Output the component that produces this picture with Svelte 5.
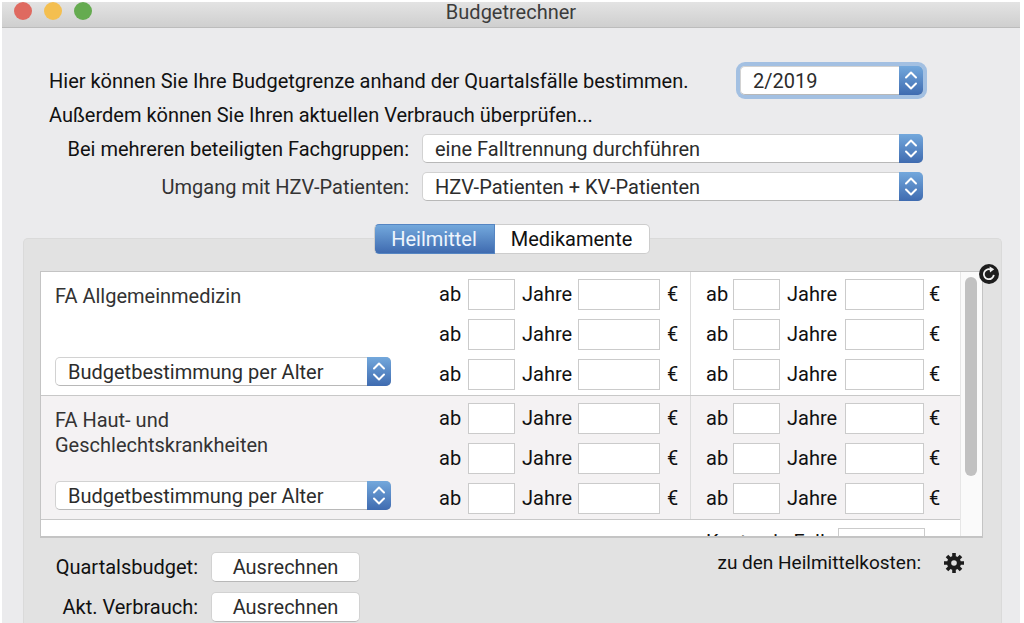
<script lang="ts">
  let quarter = $state("2/2019");
  let split = $state("eine Falltrennung durchführen");
  let hzv = $state("HZV-Patienten + KV-Patienten");
  let tab = $state("Heilmittel");

  const tabs = ["Heilmittel", "Medikamente"];
  const groups = $state([
    { name: "FA Allgemeinmedizin", mode: "Budgetbestimmung per Alter" },
    { name: "FA Haut- und Geschlechtskrankheiten", mode: "Budgetbestimmung per Alter" },
  ]);
</script>

{#snippet stepper()}
  <span class="stepper" aria-hidden="true">
    <svg viewBox="0 0 24 29" width="24" height="29">
      <path d="M7 11.5 L12 6.5 L17 11.5 M7 17.5 L12 22.5 L17 17.5" />
    </svg>
  </span>
{/snippet}

{#snippet ages(prefix: string, side: string)}
  <div class="ages {side}">
    {#each [1, 2, 3] as n}
      <div class="age-row">
        <label for="{prefix}-{side}-{n}">ab</label>
        <input id="{prefix}-{side}-{n}" type="text" />
        <label class="years" for="{prefix}-{side}-{n}-eur">Jahre</label>
        <input id="{prefix}-{side}-{n}-eur" type="text" />
        <span class="euro">€</span>
      </div>
    {/each}
  </div>
{/snippet}

<main class="window">
  <header class="titlebar">
    <div class="lights">
      <button class="light red" aria-label="Schließen"></button>
      <button class="light yellow" aria-label="Minimieren"></button>
      <button class="light green" aria-label="Vergrößern"></button>
    </div>
    <h1>Budgetrechner</h1>
  </header>

  <section class="settings">
    <div class="intro">
      <label for="quarter">Hier können Sie Ihre Budgetgrenze anhand der Quartalsfälle bestimmen.</label>
      <div class="popup focused">
        <select id="quarter" bind:value={quarter}>
          <option>2/2019</option>
        </select>
        {@render stepper()}
      </div>
    </div>
    <p>Außerdem können Sie Ihren aktuellen Verbrauch überprüfen...</p>
    <div class="form">
      <label for="split">Bei mehreren beteiligten Fachgruppen:</label>
      <div class="popup">
        <select id="split" bind:value={split}>
          <option>eine Falltrennung durchführen</option>
        </select>
        {@render stepper()}
      </div>
      <label class="soft" for="hzv">Umgang mit HZV-Patienten:</label>
      <div class="popup">
        <select id="hzv" bind:value={hzv}>
          <option>HZV-Patienten + KV-Patienten</option>
        </select>
        {@render stepper()}
      </div>
    </div>
  </section>

  <section class="panel">
    <div class="tabs" role="tablist">
      {#each tabs as name}
        <button role="tab" aria-selected={tab === name} class:active={tab === name} onclick={() => (tab = name)}>{name}</button>
      {/each}
    </div>

    <div class="list">
      <div class="rows">
        {#each groups as group, i}
          <div class="row">
            <div class="group">
              <label for="mode-{i}">{group.name}</label>
              <div class="popup">
                <select id="mode-{i}" bind:value={group.mode}>
                  <option>Budgetbestimmung per Alter</option>
                </select>
                {@render stepper()}
              </div>
            </div>
            {@render ages(`g${i}`, "first")}
            {@render ages(`g${i}`, "second")}
          </div>
        {/each}
        <div class="row next">
          <label for="next">Kosten je Fall</label>
          <input id="next" type="text" />
        </div>
      </div>
      <div class="scrollbar"><div class="thumb"></div></div>
      <button class="reload" aria-label="Neu laden">
        <svg viewBox="0 0 20 20" width="20" height="20">
          <circle cx="10" cy="10" r="10" fill="#1d1d1d" />
          <path d="M14.8 10.8 A5 5 0 1 1 11.2 5.4" fill="none" stroke="#f2f2f2" stroke-width="1.8" />
          <path d="M10.6 2.4 L15.2 5.2 L11 8.6 Z" fill="#f2f2f2" />
        </svg>
      </button>
    </div>

    <footer class="actions">
      <div class="results">
        <span id="budget">Quartalsbudget:</span>
        <button aria-describedby="budget">Ausrechnen</button>
        <span id="usage">Akt. Verbrauch:</span>
        <button aria-describedby="usage">Ausrechnen</button>
      </div>
      <div class="costs">
        <span>zu den Heilmittelkosten:</span>
        <button class="gear" aria-label="Heilmittelkosten">
          <svg viewBox="0 0 22 22" width="22" height="22">
            <g stroke="#1d1d1d" stroke-width="3.6">
              <path d="M11 1 V21 M1 11 H21 M4 4 L18 18 M18 4 L4 18" />
            </g>
            <circle cx="11" cy="11" r="7" fill="#1d1d1d" />
            <circle cx="11" cy="11" r="2.8" fill="#e2e2e2" />
          </svg>
        </button>
      </div>
    </footer>
  </section>
</main>

<style>
  :global(body) {
    background: #fff;
  }

  * {
    box-sizing: border-box;
  }

  .window {
    display: flex;
    flex-direction: column;
    min-height: calc(100vh - 2px);
    margin: 2px 4px 0 2px;
    background: #ebebed;
    color: #111;
    font-family: Roboto, "Liberation Sans", sans-serif;
    font-size: 20px;
    line-height: 25px;
  }

  button,
  select,
  input {
    margin: 0;
    padding: 0;
    border: 0;
    font: inherit;
    color: inherit;
  }

  .titlebar {
    display: grid;
    grid-template-columns: 1fr auto 1fr;
    height: 26px;
    background: linear-gradient(#e3e3e3, #cfcfcf);
    border-bottom: 1px solid #bcbcbc;
  }

  .titlebar h1 {
    margin: 0;
    font-size: 20px;
    line-height: 21px;
    font-weight: 400;
    color: #3c3c3c;
  }

  .lights {
    display: flex;
    gap: 12px;
    padding-left: 12px;
  }

  .light {
    width: 18px;
    height: 18px;
    border-radius: 50%;
  }

  .red {
    background: #df6a60;
  }

  .yellow {
    background: #f4bf50;
  }

  .green {
    background: #65ab50;
  }

  .settings {
    padding: 38px 97px 0 47px;
  }

  .settings p {
    margin: 0;
    padding-top: 2px;
    line-height: 37px;
  }

  .intro {
    display: grid;
    grid-template-columns: 1fr 183px;
    align-items: center;
  }

  .intro label,
  .form label {
    padding-top: 2px;
  }

  .form {
    display: grid;
    grid-template-columns: 360px 1fr;
    gap: 9px 13px;
    align-items: center;
  }

  .form label {
    text-align: right;
  }

  .form .soft {
    color: #333;
  }

  .popup {
    display: grid;
    border-radius: 5px;
  }

  .popup select {
    grid-area: 1 / 1;
    appearance: none;
    width: 100%;
    height: 29px;
    padding: 2px 36px 0 12px;
    border: 1px solid #d2d2d2;
    border-bottom-color: #b8b8b8;
    border-radius: 5px;
    outline: none;
    background: #fff;
    color: #2c2c2c;
  }

  .focused {
    box-shadow: 0 0 0 4px #a3c0e2;
  }

  .stepper {
    grid-area: 1 / 1;
    justify-self: end;
    width: 24px;
    height: 29px;
    border-radius: 0 5px 5px 0;
    background: linear-gradient(#73a8dc, #3f6bb0);
    pointer-events: none;
  }

  .stepper svg {
    display: block;
    fill: none;
    stroke: #fff;
    stroke-width: 2;
    stroke-linecap: round;
    stroke-linejoin: round;
  }

  .panel {
    flex: 1;
    margin: 37px 18px 0 21px;
    padding: 0 18px 1px 16px;
    background: #e2e2e2;
    border: 1px solid #dadada;
    border-bottom: 0;
    border-radius: 5px 5px 0 0;
  }

  .tabs {
    display: flex;
    justify-content: center;
    margin: -15px 0 17px;
  }

  .tabs button {
    width: 155px;
    height: 30px;
    background: #fff;
    border: 1px solid #cdcdcd;
    border-left: 0;
    border-radius: 0 5px 5px 0;
  }

  .tabs button:first-child {
    width: 121px;
    border-left: 1px solid #cdcdcd;
    border-radius: 5px 0 0 5px;
  }

  .tabs .active {
    background: linear-gradient(#73a8dc, #3f6bb0);
    border-color: #5585c2;
    color: #eef5fd;
  }

  .list {
    position: relative;
    display: flex;
    height: 267px;
    background: #fff;
    border: 1px solid #c4c4c4;
    border-bottom-width: 2px;
  }

  .rows {
    flex: 1;
    overflow: hidden;
  }

  .row {
    display: grid;
    grid-template-columns: 1fr 251px 270px;
    height: 124px;
    border-bottom: 1px solid #c8c8c8;
  }

  .row:nth-child(even) {
    background: #f4f2f3;
  }

  .group {
    display: flex;
    flex-direction: column;
    justify-content: space-between;
    width: 350px;
    padding: 12px 0 9px 14px;
    color: #333;
  }

  .group label {
    width: 240px;
  }

  .ages {
    display: flex;
    flex-direction: column;
    gap: 9px;
    padding-top: 7px;
  }

  .age-row {
    display: grid;
    grid-template-columns: 29px 47px 63px 82px 1fr;
    align-items: center;
  }

  .second {
    padding-left: 15px;
    border-left: 1px solid #dcdcdc;
  }

  .second .age-row {
    grid-template-columns: 27px 47px 65px 79px 1fr;
  }

  .age-row input,
  .next input {
    width: 100%;
    height: 31px;
    background: #fff;
    border: 1px solid #cbcbcb;
  }

  .years {
    padding-left: 7px;
  }

  .euro {
    padding-left: 7px;
  }

  .second .euro {
    padding-left: 5px;
  }

  .next {
    grid-template-columns: 132px 87px;
    justify-content: end;
    padding: 8px 35px 0 0;
  }

  .next label {
    padding-top: 2px;
  }

  .scrollbar {
    width: 22px;
    padding: 5px 4px;
    background: #fafafa;
    border-left: 1px solid #e6e6e6;
  }

  .thumb {
    width: 12px;
    height: 199px;
    border-radius: 6px;
    background: #c1c1c1;
  }

  .reload {
    position: absolute;
    top: -8px;
    right: -17px;
    width: 20px;
    height: 20px;
    background: none;
  }

  .reload svg,
  .gear svg {
    display: block;
  }

  .actions {
    display: flex;
    justify-content: space-between;
    align-items: flex-start;
    padding: 14px 18px 0 0;
  }

  .results {
    display: grid;
    grid-template-columns: 158px 149px;
    gap: 10px 13px;
    align-items: center;
    text-align: right;
  }

  .results button {
    height: 30px;
    background: #fff;
    border: 1px solid #d2d2d2;
    border-bottom-color: #b8b8b8;
    border-radius: 5px;
    color: #2c2c2c;
    text-align: center;
  }

  .costs {
    display: flex;
    align-items: center;
    gap: 22px;
    font-size: 19px;
    line-height: 22px;
  }

  .gear {
    background: none;
  }
</style>
